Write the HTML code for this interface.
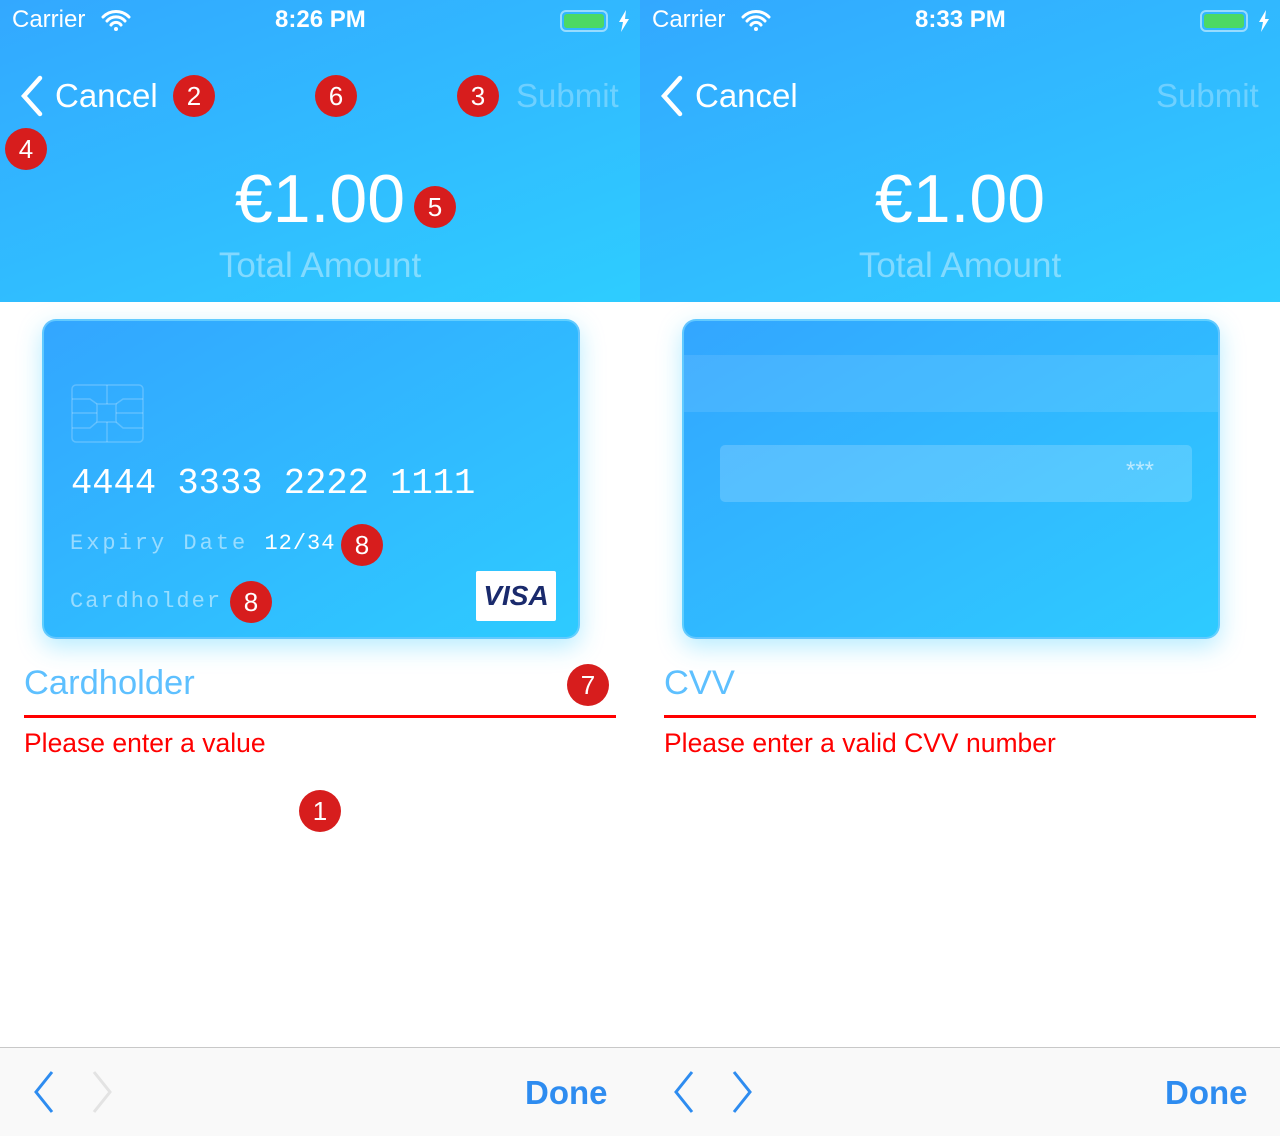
<!DOCTYPE html>
<html><head><meta charset="utf-8"><style>
*{margin:0;padding:0;box-sizing:border-box}
body{width:1280px;height:1136px;position:relative;overflow:hidden;background:#fff;font-family:"Liberation Sans",sans-serif}
.p{position:absolute;top:0;width:640px;height:1136px;overflow:hidden}
.hd{position:absolute;left:0;top:0;width:640px;height:302px;background:linear-gradient(160deg,#33a8ff,#2ecdff)}
.a{position:absolute;white-space:nowrap}
.st{top:6px;font-size:24px;color:#fff}
.card{position:absolute;left:42px;top:319px;width:538px;height:320px;border-radius:14px;background:linear-gradient(150deg,#33a6ff,#2ecbff);box-shadow:0 8px 24px rgba(46,200,255,.35);border:2px solid rgba(120,210,255,.7)}
.mono{font-family:"Liberation Mono","DejaVu Sans Mono",monospace}
.b{position:absolute;width:42px;height:42px;margin:-21px 0 0 -21px;border-radius:50%;background:#d71d1d;color:#fff;font-size:26px;text-align:center;line-height:42px}
.tb{position:absolute;left:0;top:1047px;width:640px;height:89px;background:#f9f9f9;border-top:1px solid #c8c8c8}
</style></head><body>

<div class="p" style="left:0">
 <div class="hd"></div>
 <div class="a st" style="left:12px">Carrier</div>
 <svg class="a" style="left:101px;top:9px" width="30" height="22" viewBox="0 0 30 22"><path d="M2 8a18 18 0 0 1 26 0M6 12a12 12 0 0 1 18 0M10 16a6 6 0 0 1 10 0" stroke="#fff" stroke-width="3" fill="none" stroke-linecap="round"/><circle cx="15" cy="20" r="2" fill="#fff"/></svg>
 <div class="a st" style="left:275px;font-weight:bold">8:26 PM</div>
 <div class="a" style="left:560px;top:10px;width:48px;height:22px;border:2px solid rgba(255,255,255,.5);border-radius:6px;padding:2px"><div style="width:100%;height:100%;background:#4cd964;border-radius:3px"></div></div>
 <svg class="a" style="left:618px;top:10px" width="12" height="22" viewBox="0 0 12 22"><path d="M8 0L1 12h4l-2 10 8-13H7z" fill="#fff"/></svg>
 <svg class="a" style="left:18px;top:74px" width="28" height="44" viewBox="0 0 28 44"><path d="M22 4L6 22l16 18" stroke="#fff" stroke-width="4.5" fill="none" stroke-linecap="round"/></svg>
 <div class="a" style="left:55px;top:77px;font-size:33px;color:#fff">Cancel</div>
 <div class="a" style="left:516px;top:77px;font-size:33px;color:rgba(255,255,255,.3)">Submit</div>
 <div class="a" style="left:0;width:640px;text-align:center;top:160px;font-size:68px;color:#fff">€1.00</div>
 <div class="a" style="left:0;width:640px;text-align:center;top:246px;font-size:35px;color:rgba(255,255,255,.4)">Total Amount</div>

 <div class="card">
  <svg class="a" style="left:27px;top:63px" width="74" height="60" viewBox="0 0 74 60" fill="none" stroke="rgba(255,255,255,.22)" stroke-width="1.5"><rect x="1" y="1" width="71" height="57" rx="4"/><rect x="26" y="20" width="19" height="18"/><path d="M36 1v19M36 38v20M1 15h18l7 5M72 15H52l-7 5M1 29h25M45 29h27M1 44h18l7-6M72 44H52l-7-6"/></svg>
  <div class="a mono" style="left:27px;top:142px;font-size:36px;color:#fff;transform:scaleX(.985);transform-origin:left">4444 3333 2222 1111</div>
  <div class="a mono" style="left:26px;top:210px;font-size:22px;color:rgba(255,255,255,.5);letter-spacing:3px">Expiry Date <span style="color:#fff;letter-spacing:1px">12/34</span></div>
  <div class="a mono" style="left:26px;top:268px;font-size:22px;color:rgba(255,255,255,.5);letter-spacing:2px">Cardholder</div>
  <div class="a" style="left:432px;top:250px;width:80px;height:50px;background:#fff;border-radius:2px;text-align:center;line-height:50px;font-size:28px;font-weight:bold;font-style:italic;color:#1a2a6c">VISA</div>
 </div>

 <div class="a" style="left:24px;top:664px;font-size:34.5px;color:#5ec0ff">Cardholder</div>
 <div class="a" style="left:24px;top:715px;width:592px;height:3px;background:#f00"></div>
 <div class="a" style="left:24px;top:728px;font-size:26.5px;color:#f00">Please enter a value</div>

 <div class="tb">
  <svg class="a" style="left:28px;top:22px" width="90" height="44" viewBox="0 0 90 44"><path d="M24 2L8 22l16 20" stroke="#2e8cf0" stroke-width="3" fill="none"/><path d="M66 2l16 20-16 20" stroke="#e3e3e3" stroke-width="3" fill="none"/></svg>
  <div class="a" style="left:525px;top:26px;font-size:33px;font-weight:bold;color:#2e8cf0">Done</div>
 </div>

 <div class="b" style="left:194px;top:96px">2</div>
 <div class="b" style="left:336px;top:96px">6</div>
 <div class="b" style="left:478px;top:96px">3</div>
 <div class="b" style="left:26px;top:149px">4</div>
 <div class="b" style="left:435px;top:207px">5</div>
 <div class="b" style="left:362px;top:545px">8</div>
 <div class="b" style="left:251px;top:602px">8</div>
 <div class="b" style="left:588px;top:685px">7</div>
 <div class="b" style="left:320px;top:811px">1</div>
</div>

<div class="p" style="left:640px">
 <div class="hd"></div>
 <div class="a st" style="left:12px">Carrier</div>
 <svg class="a" style="left:101px;top:9px" width="30" height="22" viewBox="0 0 30 22"><path d="M2 8a18 18 0 0 1 26 0M6 12a12 12 0 0 1 18 0M10 16a6 6 0 0 1 10 0" stroke="#fff" stroke-width="3" fill="none" stroke-linecap="round"/><circle cx="15" cy="20" r="2" fill="#fff"/></svg>
 <div class="a st" style="left:275px;font-weight:bold">8:33 PM</div>
 <div class="a" style="left:560px;top:10px;width:48px;height:22px;border:2px solid rgba(255,255,255,.5);border-radius:6px;padding:2px"><div style="width:100%;height:100%;background:#4cd964;border-radius:3px"></div></div>
 <svg class="a" style="left:618px;top:10px" width="12" height="22" viewBox="0 0 12 22"><path d="M8 0L1 12h4l-2 10 8-13H7z" fill="#fff"/></svg>
 <svg class="a" style="left:18px;top:74px" width="28" height="44" viewBox="0 0 28 44"><path d="M22 4L6 22l16 18" stroke="#fff" stroke-width="4.5" fill="none" stroke-linecap="round"/></svg>
 <div class="a" style="left:55px;top:77px;font-size:33px;color:#fff">Cancel</div>
 <div class="a" style="left:516px;top:77px;font-size:33px;color:rgba(255,255,255,.3)">Submit</div>
 <div class="a" style="left:0;width:640px;text-align:center;top:160px;font-size:68px;color:#fff">€1.00</div>
 <div class="a" style="left:0;width:640px;text-align:center;top:246px;font-size:35px;color:rgba(255,255,255,.4)">Total Amount</div>

 <div class="card" style="overflow:hidden">
  <div class="a" style="left:0;top:34px;width:100%;height:57px;background:rgba(255,255,255,.1)"></div>
  <div class="a" style="left:36px;top:124px;width:472px;height:57px;border-radius:5px;background:rgba(255,255,255,.18)"></div>
  <div class="a" style="left:442px;top:136px;font-size:24px;color:rgba(255,255,255,.6)">***</div>
 </div>

 <div class="a" style="left:24px;top:664px;font-size:34.5px;color:#5ec0ff">CVV</div>
 <div class="a" style="left:24px;top:715px;width:592px;height:3px;background:#f00"></div>
 <div class="a" style="left:24px;top:728px;font-size:26.5px;color:#f00">Please enter a valid CVV number</div>

 <div class="tb">
  <svg class="a" style="left:28px;top:22px" width="90" height="44" viewBox="0 0 90 44"><path d="M24 2L8 22l16 20" stroke="#2e8cf0" stroke-width="3" fill="none"/><path d="M66 2l16 20-16 20" stroke="#2e8cf0" stroke-width="3" fill="none"/></svg>
  <div class="a" style="left:525px;top:26px;font-size:33px;font-weight:bold;color:#2e8cf0">Done</div>
 </div>
</div>
</body></html>
